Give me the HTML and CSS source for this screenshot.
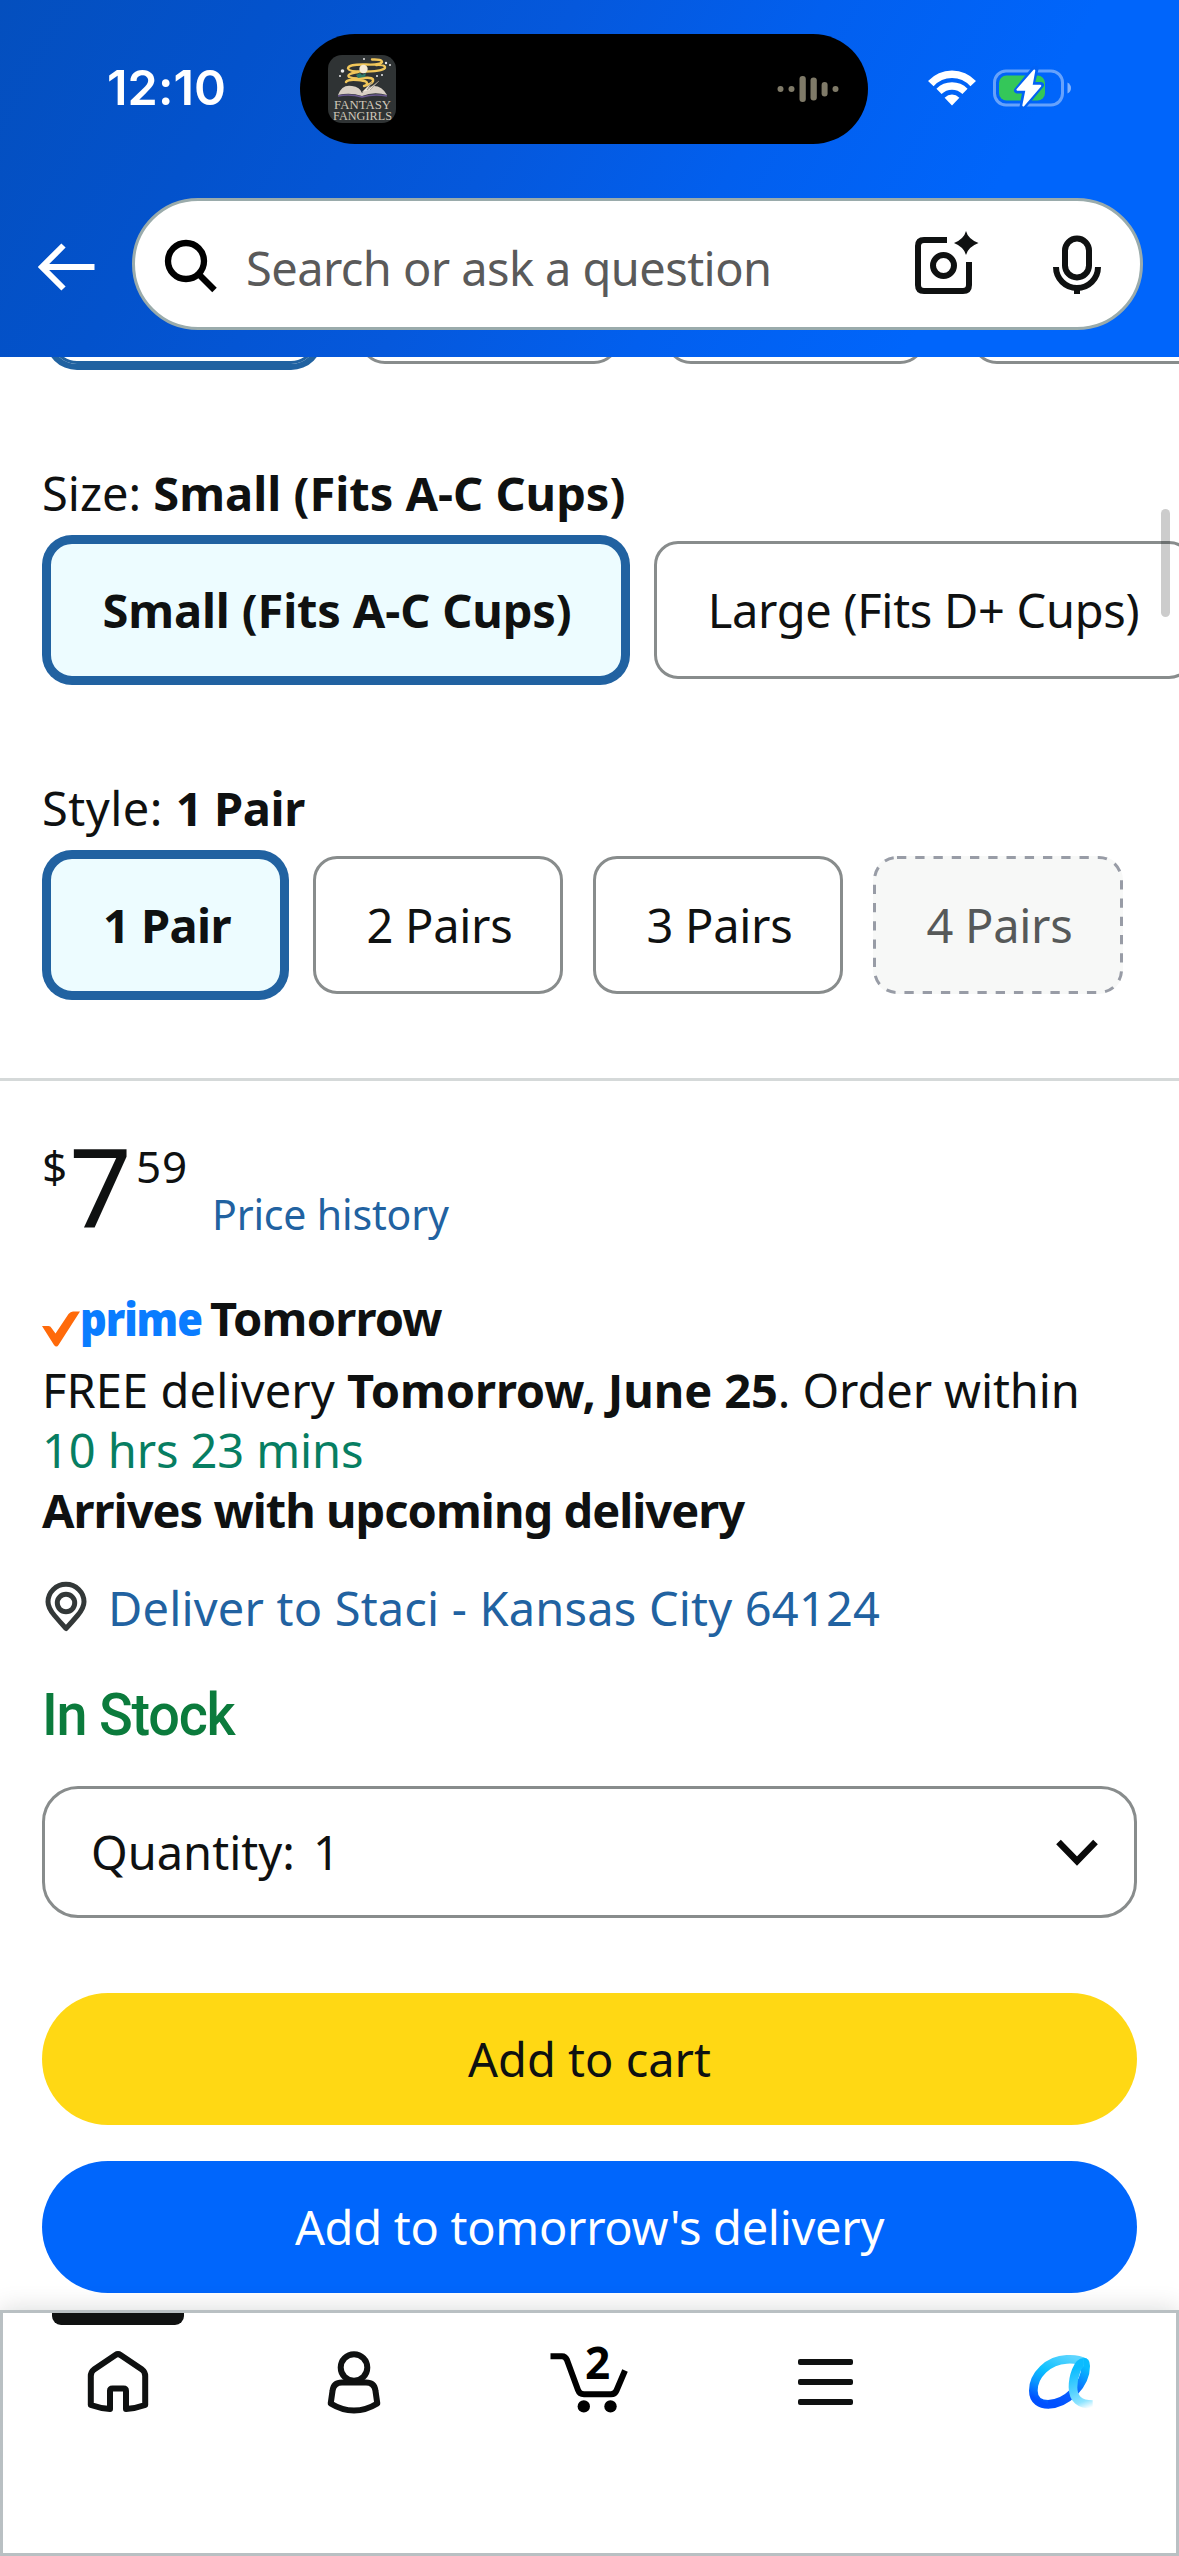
FILE: index.html
```
<!DOCTYPE html>
<html lang="en">
<head>
<meta charset="utf-8">
<title>Product options</title>
<link rel="stylesheet" href="styles.css">
</head>
<body>
<header class="header">
  <div class="status">
    <div class="time">12:10</div>
    <div class="island">
      <svg class="artwork" width="68" height="68" viewBox="0 0 68 68">
        <rect width="68" height="68" rx="14" fill="#2f3334"/>
        <g fill="none" stroke="#f0c65a" stroke-width="2.4" stroke-linecap="round">
          <path d="M44 4.500Q54 4 54 7Q53 10 38 9.500Q20 9 20 13.500Q21 17 38 16.500Q58 16 57 12Q56 9.500 48 10"/>
          <path d="M30 17Q18 19 21 22Q26 24 36 23Q46 22 45 26Q44 29 36 31M18 27Q20 24 30 25Q42 26 38 30"/>
        </g>
        <circle cx="35.500" cy="14" r="4.200" fill="#f5ead6"/>
        <path d="M28 20l4-2 2 2 4-2-1 4-7 1z" fill="#2d7a6a"/>
        <path d="M10 40Q14 29 24 31Q32 32 34 38Q38 32 46 31Q54 31 59 40Q46 36 34 41Q22 37 10 40Z" fill="#d9d0c4"/>
        <path d="M34 37L44 27L39 35L51 26L42 35" fill="#efe8db" stroke="#8e867c" stroke-width=".6"/>
        <path d="M10 41Q22 38.500 34 42Q46 38.500 59 41" fill="none" stroke="#6d5c92" stroke-width="1.500"/>
        <g fill="#e8e8e8"><circle cx="14.500" cy="16" r="1.800"/><circle cx="36" cy="4" r="1"/><circle cx="58" cy="8" r="1.200"/><circle cx="62" cy="10" r="1"/><circle cx="49" cy="21" r="1"/><circle cx="54" cy="20" r="1"/><circle cx="12" cy="21" r="1"/></g>
        <text class="art-title" x="6" y="53.500" textLength="57" lengthAdjust="spacingAndGlyphs">FANTASY</text>
        <text class="art-title" x="5" y="65" textLength="59" lengthAdjust="spacingAndGlyphs">FANGIRLS</text>
      </svg>
      <svg class="wave" width="62" height="30" viewBox="0 0 62 30" fill="#7f7a68">
        <circle cx="3.500" cy="15" r="3"/><circle cx="14.500" cy="15" r="3"/>
        <rect x="22.500" y="2" width="6.300" height="26" rx="3"/><rect x="33.500" y="3.500" width="6.300" height="23" rx="3"/><rect x="44.600" y="8" width="6" height="14.500" rx="3"/><circle cx="58.500" cy="15" r="3"/>
      </svg>
    </div>
    <svg class="wifi" width="48" height="36" viewBox="0 0 48 36" fill="none" stroke="#fff">
      <path d="M2.800 13.600Q11.500 4.200 24 4.200T45.200 13.600" stroke-width="7.600"/>
      <path d="M11 21.300Q16.500 16 24 16T37 21.300" stroke-width="7.400"/>
      <path d="M16.600 27.800Q20 24.500 24 24.500T31.400 27.800L24 35.500Z" fill="#fff" stroke="none"/>
    </svg>
    <svg class="battery" width="80" height="40" viewBox="0 0 80 40">
      <rect x="1.500" y="3" width="68" height="34" rx="11.500" fill="none" stroke="#fff" stroke-opacity=".4" stroke-width="3"/>
      <path d="M74.500 14.500Q78 16.500 78 20T74.500 25.500Z" fill="#fff" fill-opacity=".5"/>
      <rect x="6" y="7.500" width="46" height="25" rx="7.500" fill="#34c759"/>
      <path d="M41.500 1L24 22.500H32.500L29.500 39L48 17H38.500L42.500 1Z" fill="#fff" stroke="#0262f4" stroke-width="6" stroke-linejoin="round"/>
      <path d="M41.300 2.500L24.500 21.700H33.500L30.300 37.500L47.300 17.800H38.500Z" fill="#fff" stroke="#fff" stroke-width="2" stroke-linejoin="round"/>
    </svg>
  </div>
  <div class="search-row">
    <svg class="back" width="60" height="50" viewBox="0 0 60 50" fill="none" stroke="#fff" stroke-width="6">
      <path d="M57.500 25H5M26.500 3.500L5 25L26.500 46.500"/>
    </svg>
    <div class="search">
      <svg width="60" height="60" viewBox="0 0 60 60" fill="none" stroke="#000" stroke-width="6.300">
        <circle cx="26" cy="27" r="18"/><path d="M38 39.500L54.500 56"/>
      </svg>
      <span class="placeholder">Search or ask a question</span>
      <svg class="camera" width="80" height="80" viewBox="0 0 80 80" fill="none" stroke="#0f1111" stroke-width="6">
        <path d="M42 16H19Q13 16 13 22V61Q13 67 19 67H58Q64 67 64 61V38"/>
        <circle cx="38.500" cy="41.500" r="10.500"/>
        <path d="M61 7Q63 15 73.500 19Q63 23 61 31Q59 23 49 19Q59 15 61 7Z" fill="#0f1111" stroke="none"/>
      </svg>
      <svg width="60" height="60" viewBox="0 0 60 60" fill="none" stroke="#0f1111" stroke-width="6">
        <rect x="18" y="4.500" width="24" height="39" rx="12"/><path d="M9 33A21 21 0 0 0 51 33M30 53V60"/>
      </svg>
    </div>
  </div>
</header>

<main class="product">
  <div class="swatches">
    <div class="swatch selected"></div><div class="swatch"></div><div class="swatch"></div><div class="swatch"></div>
  </div>

  <section class="option">
    <div class="label">Size: <b>Small (Fits A-C Cups)</b></div>
    <div class="chips">
      <div class="chip selected size-small">Small (Fits A-C Cups)</div>
      <div class="chip size-large">Large (Fits D+ Cups)</div>
    </div>
  </section>

  <section class="option">
    <div class="label style-label">Style: <b>1 Pair</b></div>
    <div class="chips">
      <div class="chip selected one">1 Pair</div>
      <div class="chip pair">2 Pairs</div>
      <div class="chip pair">3 Pairs</div>
      <div class="chip pair unavailable">
        <svg class="dashes" width="250" height="138" viewBox="0 0 250 138"><rect x="1.500" y="1.500" width="247" height="135" rx="22.500" fill="none" stroke="#989ca6" stroke-width="3" stroke-dasharray="9.300 8.950"/></svg>
        4 Pairs
      </div>
    </div>
  </section>

  <section class="buybox">
    <div class="price">
      <span class="symbol">$</span><span class="whole">7</span><span class="cents">59</span>
      <a class="history">Price history</a>
    </div>
    <div class="prime-line">
      <svg class="check" width="38" height="36" viewBox="0 0 38 36"><path d="M0 15H6.500Q8.500 15 9.500 17L13.500 22.500L26.500 3Q28.500 .5 31 .5H38L16.500 34Q14.500 37 12 34Z" fill="#ff6a0a"/></svg>
      <div class="prime"><span>prime</span></div>
      <b class="tomorrow">Tomorrow</b>
    </div>
    <div class="delivery">
      <div><span class="free">FREE delivery</span> <b>Tomorrow, June 25</b>. Order within</div>
      <div class="countdown">10 hrs 23 mins</div>
      <div class="arrives">Arrives with upcoming delivery</div>
    </div>
    <a class="address">
      <svg width="42" height="50" viewBox="0 0 42 50" fill="none" stroke="#333838" stroke-width="5">
        <path d="M21 46.500Q15 40 9.500 33.500Q3 26 3 19.800A18 17.500 0 0 1 39 19.800Q39 26 32.500 33.500Q27 40 21 46.500Z" stroke-linejoin="round"/><circle cx="21" cy="21" r="8.700"/>
      </svg>
      <span>Deliver to Staci - Kansas City 64124</span>
    </a>
    <div class="stock"><span>In Stock</span></div>
    <div class="quantity">
      <span class="qty-label">Quantity:</span><span>1</span>
      <svg class="chevron" width="42" height="28" viewBox="0 0 42 28" fill="none" stroke="#0a0a0a" stroke-width="6.500"><path d="M2.500 3L21 22L39.500 3"/></svg>
    </div>
    <div class="button cart">Add to cart</div>
    <div class="button add-on">Add to tomorrow's delivery</div>
  </section>
</main>

<div class="scrollbar"></div>

<nav class="tabs">
  <div class="tab active">
    <svg width="120" height="100" viewBox="0 0 120 100" fill="none" stroke="#0f1111" stroke-width="6" stroke-linejoin="round">
      <path d="M57.500 25L36 39.500Q32.800 42 32.800 46V75Q42 78.300 52 79V61Q52 58.500 54.500 58.500H65.500Q68 58.500 68 61V79Q78 78.300 87.200 75V46Q87.200 42 84 39.500L62.500 25Q60 23.300 57.500 25Z"/>
    </svg>
  </div>
  <div class="tab">
    <svg width="120" height="100" viewBox="0 0 120 100" fill="none" stroke="#0f1111" stroke-width="6" stroke-linejoin="round">
      <circle cx="60" cy="37.500" r="13.300"/>
      <path d="M48 52.500H72Q80.500 52.500 81.500 61L83.300 73.500Q72 80.500 60 80.500T36.700 73.500L38.500 61Q39.500 52.500 48 52.500Z"/>
    </svg>
  </div>
  <div class="tab">
    <svg width="120" height="100" viewBox="0 0 120 100" fill="none" stroke="#000" stroke-width="6">
      <path d="M21.500 26.300H33Q36.500 26.300 38 30L49 60Q50.500 64.200 55 64.200H82Q86 64.200 87.500 60.500L96 40.500"/>
      <circle cx="54.800" cy="76.400" r="6.200" fill="#000" stroke="none"/><circle cx="81.500" cy="76.400" r="6.200" fill="#000" stroke="none"/>
      <text class="count" x="56" y="49">2</text>
    </svg>
  </div>
  <div class="tab">
    <svg width="120" height="100" viewBox="0 0 120 100" fill="#0f1111">
      <rect x="33" y="29" width="55" height="6" rx="2"/><rect x="33" y="49" width="55" height="6" rx="2"/><rect x="33" y="69" width="55" height="6" rx="2"/>
    </svg>
  </div>
  <div class="tab">
    <svg width="120" height="100" viewBox="3 0 360 300" fill="none" stroke-width="26">
      <defs>
        <linearGradient id="loop" gradientUnits="userSpaceOnUse" x1="215" y1="80" x2="145" y2="225"><stop offset="0" stop-color="#5dd5ff"/><stop offset=".45" stop-color="#0cc0ff"/><stop offset=".72" stop-color="#0a95ff"/><stop offset="1" stop-color="#0050ff"/></linearGradient>
        <linearGradient id="rise" gradientUnits="userSpaceOnUse" x1="170" y1="225" x2="255" y2="110"><stop offset="0" stop-color="#0050ff"/><stop offset=".45" stop-color="#0a60ff"/><stop offset="1" stop-color="#08bcff"/></linearGradient>
        <linearGradient id="tail" gradientUnits="userSpaceOnUse" x1="240" y1="110" x2="285" y2="228"><stop offset="0" stop-color="#0cbcff"/><stop offset=".5" stop-color="#55d2ff"/><stop offset=".8" stop-color="#8fe4ff"/><stop offset="1" stop-color="#fff"/></linearGradient>
      </defs>
      <path d="M255 98Q235 86 200 88C145 90 100 135 100 182C100 212 122 223 145 223" stroke="url(#loop)"/>
      <path d="M144 223C200 222 257 165 257 108Q257 96 250 96" stroke="url(#rise)"/>
      <path d="M251 97C233 97 219 140 219 172Q219 224 278 224" stroke="url(#tail)"/>
    </svg>
  </div>
</nav>
</body>
</html>
```
FILE: styles.css
```
* { box-sizing: border-box; }

body {
  margin: 0;
  width: 1179px;
  height: 2556px;
  display: flex;
  flex-direction: column;
  position: relative;
  overflow: hidden;
  background: #fff;
  color: #0f1111;
  font: 47px/60px "Noto Sans", "Open Sans", sans-serif;
}

svg { display: block; flex: none; overflow: visible; }

/* Header */
.header {
  flex: none;
  height: 357px;
  padding-top: 34px;
  background: linear-gradient(119deg, #044fbe 0%, #0352cc 20%, #0558dc 42%, #025fee 60%, #0065fb 80%);
}
.status { display: flex; align-items: center; height: 110px; }
.time {
  width: 300px;
  padding: 0 0 3px 107px;
  color: #fff;
  font: 600 48.500px/60px Inter, sans-serif;
  letter-spacing: .1px;
}
.island {
  width: 568px;
  height: 110px;
  padding: 0 29px 0 28px;
  display: flex;
  align-items: center;
  justify-content: space-between;
  border-radius: 55px;
  background: #000;
}
.art-title { font: 13.500px "Liberation Serif", serif; fill: #cfc8ba; }
.wifi { margin: -3px 0 0 60px; }
.battery { margin: -3px 0 0 17px; }

.search-row { display: flex; align-items: center; margin-top: 54px; padding-left: 37px; }
.back { margin: 6px 35px 0 0; }
.search {
  width: 1011px;
  height: 132px;
  padding: 0 33px 0 25px;
  display: flex;
  align-items: center;
  border: 3px solid #9aabab;
  border-radius: 66px;
  background: #fff;
}
.placeholder { margin-left: 26px; padding-top: 8px; color: #5a5a5a; letter-spacing: -.58px; }
.camera { margin: 0 62px 0 auto; }

/* Options */
.product { flex: none; height: 1953px; overflow: hidden; }
.swatches { display: flex; gap: 45px; height: 14px; margin-left: 51px; align-items: flex-end; padding-bottom: 7px; }
.swatch { flex: none; width: 261px; height: 80px; border: 3px solid #888c8c; border-radius: 26px; }
.swatch.selected { width: 266px; margin-right: -3px; border-color: #2162a1; box-shadow: 0 0 0 6px #2162a1; }

.option { padding: 92px 0 0 42px; height: 308px; }
.option + .option { padding-top: 99px; height: 315px; }
.label { letter-spacing: 0; white-space: nowrap; }
.style-label { letter-spacing: .5px; }
.style-label b { letter-spacing: -.4px; }
.chips { display: flex; gap: 30px; margin-top: 18px; padding-left: 6px; }
.chip {
  flex: none;
  position: relative;
  height: 138px;
  display: flex;
  align-items: center;
  justify-content: center;
  border: 3px solid #888c8c;
  border-radius: 24px;
  letter-spacing: -.3px;
  white-space: nowrap;
}
.chip.selected { background: #edfcff; border-color: #2162a1; box-shadow: 0 0 0 6px #2162a1; font-weight: 700; }
.chip.size-small { width: 576px; padding-left: 2px; letter-spacing: -.15px; }
.size-large { width: 539px; }
.chip.one { width: 235px; padding-left: 3px; letter-spacing: -.6px; }
.pair { width: 250px; padding-left: 3px; }
.chip.unavailable { border-color: transparent; background: #f7f8f7; color: #565959; }
.dashes { position: absolute; left: -3px; top: -3px; }

/* Buy box */
.buybox { border-top: 3px solid #d5d9d9; padding: 49px 42px 0; margin-top: 84px; }
.price { display: flex; align-items: flex-start; height: 110px; }
.symbol, .cents { font-size: 44px; padding-top: 6px; }
.symbol { width: 27px; }
.whole { width: 67px; font-size: 110px; line-height: 110px; }
.cents { width: 76px; letter-spacing: .8px; }
.history { margin-top: 54px; font-size: 41px; color: #2162a1; letter-spacing: -.16px; }

.prime-line { display: flex; align-items: center; height: 60px; margin-top: 48px; }
.check { margin-top: 22px; }
.prime {
  width: 128px;
  color: #0a7cff;
  font: 800 46px/60px "Open Sans", sans-serif;
  letter-spacing: -1.200px;
}
.prime span { display: inline-block; transform: scaleX(.905); transform-origin: 0 50%; }
.tomorrow { margin-left: 2px; letter-spacing: -.8px; }
.delivery { margin-top: 12px; white-space: nowrap; letter-spacing: -.1px; }
.free { letter-spacing: .1px; }
.countdown { color: #077e62; }
.arrives { font-weight: 700; letter-spacing: -.980px; }

.address { display: flex; align-items: center; height: 60px; margin-top: 38px; padding-left: 3px; color: #2162a1; letter-spacing: .18px; }
.address svg { margin-top: -3px; }
.address span { margin-left: 21px; }

.stock { margin-top: 47px; height: 60px; color: #0b7b3c; font: 500 59px/60px Roboto, sans-serif; letter-spacing: -1.300px; }
.stock span { display: inline-block; transform: scaleX(.945); transform-origin: 0 50%; }

.quantity {
  display: flex;
  align-items: center;
  height: 132px;
  margin-top: 41px;
  padding: 0 36px 0 46px;
  border: 3px solid #888c8c;
  border-radius: 36px;
}
.qty-label { width: 222px; }
.chevron { margin: 2px 0 0 auto; }

.button { height: 132px; line-height: 132px; border-radius: 66px; text-align: center; }
.cart { margin-top: 75px; background: #ffd814; }
.add-on { margin-top: 36px; background: #0066fc; color: #fff; letter-spacing: -.3px; }

.scrollbar { position: absolute; left: 1161px; top: 509px; width: 9px; height: 108px; border-radius: 5px; background: rgba(0, 0, 0, .2); }

/* Bottom tabs */
.tabs {
  flex: none;
  position: relative;
  height: 246px;
  padding-top: 20px;
  display: grid;
  grid-template-columns: repeat(5, 1fr);
  background: #fff;
  box-shadow: inset 0 0 0 3px #b9c0c3, 0 0 24px rgba(15, 17, 17, .16);
}
.tab { position: relative; display: flex; justify-content: center; }
.tab.active::before { content: ""; position: absolute; left: 52px; top: -17px; width: 132px; height: 12px; border-radius: 0 0 9px 9px; background: #0f1111; }
.count { font: 700 44px "Noto Sans", sans-serif; fill: #000; stroke: none; }
```
